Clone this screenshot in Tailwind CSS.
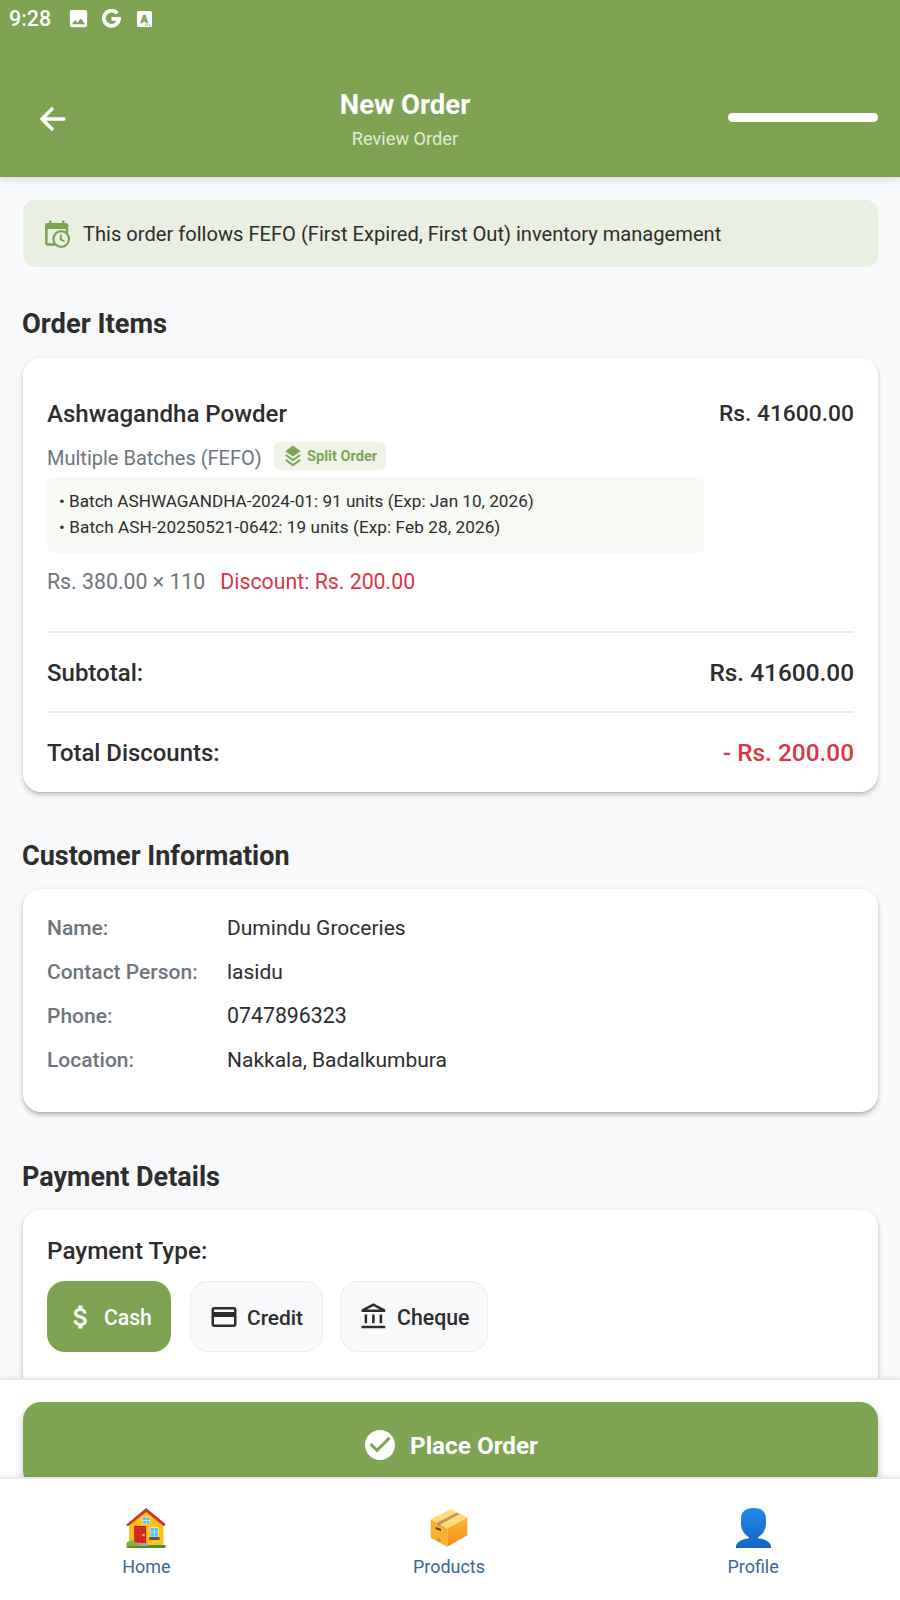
<!DOCTYPE html>
<html lang="en">
<head>
<meta charset="utf-8">
<meta name="viewport" content="width=device-width, initial-scale=1">
<title>New Order</title>
<script src="https://cdn.jsdelivr.net/npm/@tailwindcss/browser@4"></script>
</head>
<body class="flex h-[1600px] w-[900px] flex-col overflow-hidden bg-[#f8f9fb] font-[Roboto,sans-serif] text-[#2d2d2d]">

<header class="relative z-10 h-[177px] shrink-0 bg-[#7ea453] text-white shadow-[0_2px_8px_rgba(0,0,0,0.14)]">
  <!-- status bar -->
  <div class="flex h-[37px] items-center pl-[9px]">
    <span class="w-[58px] text-[21.4px] leading-6 font-medium">9:28</span>
    <svg class="size-[23px]" viewBox="0 0 24 24" fill="currentColor"><path d="M21 19V5c0-1.100-.9-2-2-2H5c-1.100 0-2 .9-2 2v14c0 1.100.9 2 2 2h14c1.100 0 2-.9 2-2zM8.500 13.500l2.500 3.010L14.500 12l4.500 6H5l3.500-4.500z"/></svg>
    <svg class="ml-3 size-[19px]" viewBox="0 0 19 19" fill="none" stroke="currentColor" stroke-width="3.800"><path d="M15.300 4.300A7.600 7.600 0 1 0 17.100 9.900H9.500"/></svg>
    <svg class="ml-4 h-4 w-[15px]" viewBox="0 0 15 16"><rect width="15" height="16" rx="1.500" fill="#fff"/><text x="7.300" y="11.800" text-anchor="middle" font-family="Roboto" font-weight="900" font-size="11" fill="#7ea453" stroke="#7ea453" stroke-width=".4">A</text><path d="M8 14.200h1.200M10.200 14.200h1.200M12.300 14.200h1.200" stroke="#7ea453" stroke-width="1.200"/></svg>
  </div>
  <!-- title row -->
  <div class="flex h-[140px] items-center pr-[22px] pl-[38px]">
    <svg class="mt-6 size-[30px]" viewBox="0 0 30 30" fill="none" stroke="currentColor" stroke-width="3.600" stroke-linecap="round" stroke-linejoin="round"><path d="M26 15H4.500M14 5L4 15l10 10"/></svg>
    <div class="mt-7 ml-[187px] flex w-[300px] flex-col items-center">
      <h1 class="text-[27.500px] leading-8 font-bold">New Order</h1>
      <p class="mt-1 text-[18.200px] leading-7 text-[#e2ebd9]">Review Order</p>
    </div>
    <div class="mt-[21px] ml-auto h-[9px] w-[150px] rounded-full bg-white"></div>
  </div>
</header>

<main class="min-h-0 flex-1 overflow-hidden px-[23px]">
  <div class="mt-[23px] flex h-[67px] w-[855px] items-center rounded-xl bg-[#e9efe1] pl-[21px]">
    <svg class="size-[30px]" viewBox="0 0 30 30"><path fill="#7ea453" d="M5 1.500h2.500V4H18V1.500h2.500V4H22q2.300 0 2.300 2.300V14.500h-2.500V10H3.600v14.200H11v2.500H3.400q-2.400 0-2.400-2.400V6.400Q1 4 3.400 4H5z"/><circle cx="17.200" cy="20" r="7.800" fill="#e9efe1" stroke="#7ea453" stroke-width="2.300"/><path d="M16.900 15.500v5l3.600 2" fill="none" stroke="#7ea453" stroke-width="1.900"/></svg>
    <p class="ml-[9px] text-[20.130px] leading-6">This order follows FEFO (First Expired, First Out) inventory management</p>
  </div>

  <h2 class="mt-[41px] mb-[17px] -ml-px h-8 text-[27.300px] leading-8 font-bold">Order Items</h2>
  <section class="h-[435px] w-[855px] rounded-[18px] border-t border-[#f1f2f4] bg-white px-6 pt-10 shadow-[0_3px_5px_rgba(0,0,0,0.2),0_1px_1px_rgba(0,0,0,0.1)]">
    <div class="flex h-8 justify-between">
      <h3 class="text-[24.050px] leading-8 font-medium">Ashwagandha Powder</h3>
      <span class="text-[22.800px] leading-8 font-medium">Rs. 41600.00</span>
    </div>
    <div class="mt-3 flex h-7 items-start">
      <span class="w-[227px] text-[20px] leading-8 whitespace-nowrap text-[#6c757d]">Multiple Batches (FEFO)</span>
      <span class="flex h-7 w-28 items-center rounded-md bg-[#eff4e9] pl-[11px] text-[14.600px] leading-5 font-bold text-[#7ea453]">
        <svg class="mr-1.5 h-[22px] w-4" viewBox="0 0 16 22"><path fill="#7ea453" d="M8 .5L15.700 6.200 8 11.400.3 6.200z"/><path fill="none" stroke="#7ea453" stroke-width="1.900" d="M.8 10L8 15l7.200-5M.8 14.900L8 20l7.200-5.100"/></svg>Split Order</span>
    </div>
    <div class="mt-[7px] h-[76px] w-[657px] rounded-md bg-[#f7f9f4] pt-[11px] pl-3 text-[17.150px] leading-[26px]">
      <p>• Batch ASHWAGANDHA-2024-01: 91 units (Exp: Jan 10, 2026)</p>
      <p class="tracking-[0.09px]">• Batch ASH-20250521-0642: 19 units (Exp: Feb 28, 2026)</p>
    </div>
    <div class="mt-[17px] flex h-6 gap-[15px] text-[21.300px] leading-6 whitespace-nowrap">
      <span class="text-[#6c757d]">Rs. 380.00 × 110</span>
      <span class="text-[#dc3545]">Discount: Rs. 200.00</span>
    </div>
    <div class="mt-[37px] flex h-20 items-center justify-between border-t-2 border-[#e9ecef] pt-0.5 text-[24px] font-medium">
      <span>Subtotal:</span><span class="text-[24.400px]">Rs. 41600.00</span>
    </div>
    <div class="flex h-[81px] items-center justify-between border-t-2 border-[#e9ecef] pt-0.5 text-[23.900px] font-medium">
      <span>Total Discounts:</span><span class="text-[24.400px] text-[#dc3545]">- Rs. 200.00</span>
    </div>
  </section>

  <h2 class="mt-12 mb-4 -ml-px h-8 text-[27px] leading-8 font-bold">Customer Information</h2>
  <section class="h-[224px] w-[855px] rounded-[18px] border-t border-[#f1f2f4] bg-white px-6 pt-[17px] shadow-[0_3px_5px_rgba(0,0,0,0.24),0_1px_1px_rgba(0,0,0,0.1)]">
    <dl class="grid grid-cols-[180px_1fr] text-[21px] leading-[44px]">
      <dt class="font-medium text-[#6c757d]">Name:</dt><dd>Dumindu Groceries</dd>
      <dt class="font-medium text-[#6c757d]">Contact Person:</dt><dd>lasidu</dd>
      <dt class="font-medium text-[#6c757d]">Phone:</dt><dd class="text-[21.300px]">0747896323</dd>
      <dt class="font-medium text-[#6c757d]">Location:</dt><dd>Nakkala, Badalkumbura</dd>
    </dl>
  </section>

  <h2 class="mt-[49px] mb-4 -ml-px h-8 text-[27px] leading-8 font-bold">Payment Details</h2>
  <section class="h-[300px] w-[855px] rounded-[18px] border-t border-[#f1f2f4] bg-white px-6 pt-[25px] shadow-[0_3px_5px_rgba(0,0,0,0.24),0_1px_1px_rgba(0,0,0,0.1)]">
    <h3 class="h-8 text-[24.300px] leading-8 font-medium">Payment Type:</h3>
    <div class="mt-[14px] flex h-[71px] text-[21.150px] leading-6 font-medium">
      <button class="flex w-[124px] items-center gap-2 rounded-[18px] bg-[#7ea453] pl-[19px] text-white">
        <svg class="size-[30px]" viewBox="0 0 24 24" fill="currentColor" stroke="currentColor" stroke-width=".4"><path d="M11.800 10.900c-2.270-.59-3-1.200-3-2.150 0-1.090 1.010-1.850 2.700-1.850 1.780 0 2.440.85 2.500 2.100h2.210c-.07-1.720-1.120-3.300-3.210-3.810V3h-3v2.160c-1.940.42-3.500 1.680-3.500 3.610 0 2.310 1.910 3.460 4.700 4.130 2.500.6 3 1.480 3 2.410 0 .69-.49 1.790-2.700 1.790-2.060 0-2.870-.92-2.980-2.100h-2.200c.12 2.190 1.760 3.420 3.680 3.830V21h3v-2.150c1.950-.37 3.500-1.500 3.500-3.550 0-2.840-2.430-3.810-4.700-4.400z"/></svg>
        <span class="pt-0.5">Cash</span>
      </button>
      <button class="ml-[19px] flex w-[133px] items-center gap-2 rounded-[18px] border border-[#e9ecef] bg-[#f8f9fb] pl-[18px]">
        <svg class="size-[30px]" viewBox="0 0 24 24" fill="currentColor"><path d="M20 4H4c-1.110 0-1.990.89-1.990 2L2 18c0 1.110.89 2 2 2h16c1.110 0 2-.89 2-2V6c0-1.110-.89-2-2-2zm0 14H4v-6h16v6zm0-10H4V6h16v2z"/></svg>
        <span class="pt-0.5 text-[20.900px]">Credit</span>
      </button>
      <button class="ml-[17px] flex w-[148px] items-center gap-2 rounded-[18px] border border-[#e9ecef] bg-[#f8f9fb] pl-[18px]">
        <svg class="size-[30px]" viewBox="0 0 24 24" fill="currentColor"><path d="M6.500 10h-2v7h2v-7zm6 0h-2v7h2v-7zm8.500 9H2v2h19v-2zm-2.500-9h-2v7h2v-7zm-7-6.740L16.710 6H6.290l5.210-2.740m0-2.260L2 6v2h19V6l-9.500-5z"/></svg>
        <span class="pt-0.5 text-[21.300px]">Cheque</span>
      </button>
    </div>
  </section>
</main>

<div class="relative h-[99px] shrink-0 border-t-2 border-[#e7eaed] bg-white px-[23px] pt-[22px] shadow-[0_-1px_5px_rgba(0,0,0,0.05)]">
  <button class="flex h-[86px] w-[855px] items-center justify-center gap-3 rounded-[18px] bg-[#7fa454] pr-px text-white shadow-[0_4px_8px_rgba(0,0,0,0.22)]">
    <svg class="size-9" viewBox="0 0 24 24" fill="currentColor"><path d="M12 2C6.480 2 2 6.480 2 12s4.480 10 10 10 10-4.480 10-10S17.520 2 12 2zm-2 15l-5-5 1.410-1.410L10 14.170l7.590-7.590L19 8l-9 9z"/></svg>
    <span class="pt-0.5 text-[24.300px] leading-8 font-bold">Place Order</span>
  </button>
</div>

<nav class="relative z-10 flex h-[123px] shrink-0 justify-around border-t-2 border-[#e7ebf0] bg-white pt-[29px] pl-px text-[17.950px] leading-6 text-[#3b6793] shadow-[0_-1px_5px_rgba(0,0,0,0.08)]">
  <a class="flex flex-col items-center">
    <svg class="h-10 w-10" viewBox="80 54 119 120">
      <path fill="#fcc21b" d="M89 100L140 58l52 42v67H89z"/>
      <path fill="#e59a12" d="M89 102l51-42 52 42v6l-52-41-51 41z"/>
      <path fill="#558b2f" d="M82 165h116v9H82z"/>
      <path fill="#d32f2f" d="M140 54l58 48-4 7-54-44-55 44-5-5z"/>
      <path fill="#b71c1c" d="M104 108h36v52h-36z"/>
      <path fill="#e02c2c" d="M107 111h30v48h-30z"/>
      <path fill="#cf2424" d="M111 117h9v16h-9zM124 117h9v16h-9zM111 138h9v18h-9zM124 138h9v18h-9z"/>
      <circle cx="132" cy="135" r="4" fill="#ffca28"/>
      <path fill="#fdeebb" d="M128 80h24v23h-24zM151 112h26v29h-26z"/>
      <path fill="#4fc3f7" d="M130 82h9v8h-9zM141 82h9v8h-9zM130 92h9v9h-9zM141 92h9v9h-9zM153 114h10v11h-10zM165 114h10v11h-10zM153 127h10v13h-10zM165 127h10v13h-10z"/>
      <path fill="#6d4c41" d="M149 141h31v9h-31z"/>
      <path fill="#a7a7a7" d="M114 160h30l4 8h-34z"/>
      <path fill="#7cb342" d="M81 168c-3-10 3-15 9-13 4-6 13-4 14 1 8-2 14 4 13 13H82z"/>
    </svg>
    <span class="mt-[7px]">Home</span>
  </a>
  <a class="flex flex-col items-center">
    <svg class="h-10 w-10" viewBox="89 54 120 120">
      <defs><linearGradient id="boxside" x1="0" y1="0" x2="0" y2="1"><stop offset="0" stop-color="#ffb93a"/><stop offset="1" stop-color="#ef8d16"/></linearGradient></defs>
      <path fill="url(#boxside)" d="M144 115l60-33v54l-60 34z"/>
      <path fill="#fbb02e" d="M94 88l50 27v55l-50-26z"/>
      <path fill="#ffdc7a" d="M94 88l61-30 49 24-60 33z"/>
      <path fill="#c19160" d="M113 98l59-30 9 4-57 31v7l-11-5zM113 143l11 4v10l-11-5z"/>
      <path fill="#4a3426" d="M109 111l16 6v6l-16-6z"/>
    </svg>
    <span class="mt-[7px]">Products</span>
  </a>
  <a class="flex flex-col items-center">
    <svg class="h-10 w-[35px]" viewBox="0 0 35 40">
      <defs><linearGradient id="bust" x1="0" y1="0" x2="0" y2="1"><stop offset="0" stop-color="#1e8ae8"/><stop offset="1" stop-color="#1565c0"/></linearGradient></defs>
      <path fill="url(#bust)" d="M17.500 0C26 0 30 4 30 11v5c0 6-4 11-8 13.200v1C29 31 35 34 35 38.500V40H0v-1.500C0 34 6 31 13 30.200v-1C9 27 5 22 5 16v-5C5 4 9 0 17.500 0z"/>
    </svg>
    <span class="mt-[7px]">Profile</span>
  </a>
</nav>
</body>
</html>
